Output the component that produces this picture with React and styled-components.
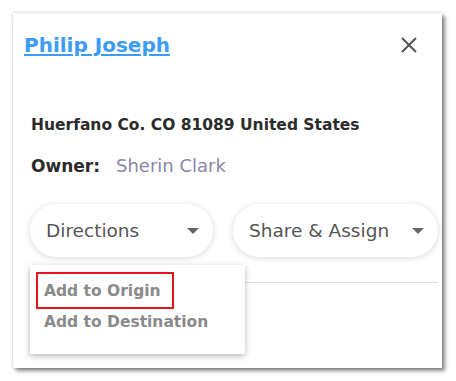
import React from 'react';
import styled, { createGlobalStyle } from 'styled-components';

const GlobalStyle = createGlobalStyle`
  html, body {
    margin: 0;
    padding: 0;
    background: #ffffff;
  }
  body {
    font-family: 'DejaVu Sans', 'Inter', sans-serif;
  }
`;

const Page = styled.div`
  width: 456px;
  height: 381px;
  padding: 13px 0 0 13px;
  box-sizing: border-box;
`;

const Card = styled.div`
  position: relative;
  width: 429px;
  height: 355px;
  box-sizing: border-box;
  background: #fff;
  box-shadow: 3px 3px 4px rgba(0, 0, 0, 0.45), 0 0 3px rgba(0, 0, 0, 0.25);
  padding: 20px 4px 0 11px;
`;

const Header = styled.div`
  display: flex;
  justify-content: space-between;
  align-items: center;
  height: 24px;
  padding-right: 20px;
`;

const Title = styled.a`
  font-size: 20px;
  font-weight: 700;
  color: #3a9cf5;
  text-decoration: underline;
  text-underline-offset: 2px;
`;

const CloseButton = styled.button`
  border: none;
  background: none;
  padding: 0;
  width: 18px;
  height: 18px;
  display: flex;
`;

const Body = styled.div`
  padding-left: 6px;
`;

const Address = styled.div`
  margin-top: 58px;
  padding-left: 1px;
  font-size: 15.5px;
  line-height: 20px;
  font-weight: 700;
  color: #2b2b2b;
`;

const OwnerRow = styled.div`
  display: flex;
  align-items: baseline;
  margin-top: 21px;
  padding-left: 1px;
  line-height: 20px;
`;

const OwnerLabel = styled.span`
  font-size: 17px;
  font-weight: 700;
  color: #2b2b2b;
  width: 85px;
`;

const OwnerName = styled.span`
  font-size: 18px;
  color: #8a86a8;
`;

const Actions = styled.div`
  display: flex;
  gap: 20px;
  margin-top: 28px;
`;

const Pill = styled.button`
  display: flex;
  align-items: center;
  justify-content: space-between;
  width: ${(p) => p.$width}px;
  height: 53px;
  box-sizing: border-box;
  padding: 0 14px 0 16px;
  border: none;
  border-radius: 27px;
  background: #fff;
  box-shadow: 0 1px 6px rgba(0, 0, 0, 0.16);
  font-family: 'DejaVu Sans', sans-serif;
  font-size: 18.5px;
  color: #555;
`;

const Caret = styled.span`
  width: 0;
  height: 0;
  border-left: 6px solid transparent;
  border-right: 6px solid transparent;
  border-top: 6px solid #666;
`;

const Divider = styled.div`
  height: 1px;
  background: #dcdcdc;
  margin-top: 25px;
`;

const Menu = styled.ul`
  position: absolute;
  left: 17px;
  top: 252px;
  width: 215px;
  height: 89px;
  box-sizing: border-box;
  margin: 0;
  padding: 7px 0 0 6px;
  list-style: none;
  background: #fff;
  box-shadow: 0 2px 6px rgba(0, 0, 0, 0.3);
`;

const MenuItem = styled.li`
  display: flex;
  align-items: center;
  width: ${(p) => (p.$highlight ? '138px' : 'auto')};
  height: ${(p) => (p.$highlight ? '37px' : '26px')};
  box-sizing: border-box;
  padding-left: ${(p) => (p.$highlight ? '6px' : '8px')};
  border: ${(p) => (p.$highlight ? '2px solid #e3131b' : 'none')};
  font-size: 15.5px;
  font-weight: 700;
  color: #8a8a8a;
`;

export default function App() {
  return (
    <>
      <GlobalStyle />
      <Page>
        <Card>
          <Header>
            <Title href="#">Philip Joseph</Title>
            <CloseButton aria-label="close">
              <svg width="18" height="18" viewBox="0 0 18 18">
                <path d="M2 2L16 16M16 2L2 16" stroke="#555" strokeWidth="2" />
              </svg>
            </CloseButton>
          </Header>
          <Body>
            <Address>Huerfano Co. CO 81089 United States</Address>
            <OwnerRow>
              <OwnerLabel>Owner:</OwnerLabel>
              <OwnerName>Sherin Clark</OwnerName>
            </OwnerRow>
            <Actions>
              <Pill $width={183}>
                Directions
                <Caret />
              </Pill>
              <Pill $width={205}>
                Share &amp; Assign
                <Caret />
              </Pill>
            </Actions>
            <Divider />
          </Body>
          <Menu>
            <MenuItem $highlight>Add to Origin</MenuItem>
            <MenuItem>Add to Destination</MenuItem>
          </Menu>
        </Card>
      </Page>
    </>
  );
}
